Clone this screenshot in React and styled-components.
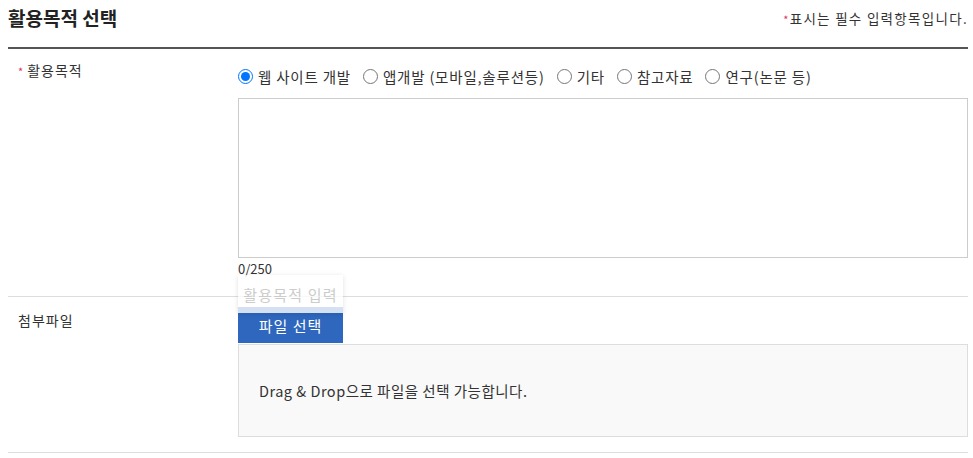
import styled, { createGlobalStyle } from 'styled-components';

const GlobalStyle = createGlobalStyle`
  body {
    margin: 0;
    background: #fff;
    font-family: "Noto Sans CJK KR", "Noto Sans", sans-serif;
    color: #333;
  }
`;

const Page = styled.div`
  width: 960px;
  padding: 0 8px;
`;

const Header = styled.div`
  display: flex;
  justify-content: space-between;
  align-items: center;
  height: 36px;
  padding-bottom: 11px;
  border-bottom: 2px solid #555;
`;

const Title = styled.h2`
  margin: 0;
  font-size: 19px;
  font-weight: 700;
  color: #222;
  line-height: 36px;
`;

const Note = styled.p`
  margin: 0;
  font-size: 13.5px;
  letter-spacing: 1.3px;
  color: #333;
`;

const Star = styled.span`
  color: #e0325b;
  font-size: 11px;
  margin-right: ${p => (p.$gap ? '3px' : '0')};
`;

const Row = styled.div`
  display: grid;
  grid-template-columns: 220px 1fr;
  padding: ${p => p.$pad};
  padding-left: 10px;
  border-bottom: 1px solid #ddd;
`;

const Label = styled.div`
  font-size: 14px;
  letter-spacing: 1px;
  line-height: 18px;
  color: #333;
  padding-top: ${p => p.$top || '0'};
`;

const Field = styled.div`
  display: flex;
  flex-direction: column;
  position: relative;
`;

const Radios = styled.div`
  display: flex;
  align-items: center;
  height: 20px;
  margin-top: 5px;
  margin-bottom: 12px;
  gap: 12px;
`;

const Option = styled.label`
  display: flex;
  align-items: center;
  gap: 5px;
  font-size: 14.5px;
  letter-spacing: 0.8px;
  color: #333;
  cursor: pointer;
`;

const Radio = styled.input`
  width: 15px;
  height: 15px;
  margin: 0;
`;

const TextArea = styled.textarea`
  box-sizing: border-box;
  width: 730px;
  height: 160px;
  border: 1px solid #ccc;
  resize: none;
  margin: 0;
  display: block;
`;

const Counter = styled.div`
  font-size: 13px;
  line-height: 18px;
  margin-top: 2px;
  color: #333;
`;

const Hint = styled.div`
  position: absolute;
  left: 0;
  top: 214px;
  width: 105px;
  height: 38px;
  display: flex;
  align-items: center;
  justify-content: center;
  background: rgba(255, 255, 255, 0.8);
  box-shadow: 0 1px 5px rgba(0, 0, 0, 0.12);
  font-size: 15px;
  color: #ccc;
  letter-spacing: 1.2px;
  z-index: 2;
`;

const Button = styled.button`
  width: 105px;
  height: 36px;
  border: none;
  background: #2e67bd;
  color: #fff;
  font-family: inherit;
  font-size: 15px;
  letter-spacing: 1px;
  cursor: pointer;
  padding: 0;
`;

const Drop = styled.div`
  box-sizing: border-box;
  width: 730px;
  height: 93px;
  margin-top: 1px;
  background: #f9f9f9;
  border: 1px solid #ddd;
  display: flex;
  align-items: center;
  padding-left: 20px;
  font-size: 14.5px;
  letter-spacing: 0.5px;
  color: #333;
`;

const options = ['웹 사이트 개발', '앱개발 (모바일,솔루션등)', '기타', '참고자료', '연구(논문 등)'];

export default function App() {
  return (
    <Page>
      <GlobalStyle />
      <Header>
        <Title>활용목적 선택</Title>
        <Note>
          <Star>*</Star>표시는 필수 입력항목입니다.
        </Note>
      </Header>
      <Row $pad="12px 0 18px">
        <Label>
          <Star $gap>*</Star>활용목적
        </Label>
        <Field>
          <Radios>
            {options.map((o, i) => (
              <Option key={o}>
                <Radio type="radio" name="purpose" defaultChecked={i === 0} />
                {o}
              </Option>
            ))}
          </Radios>
          <TextArea />
          <Counter>0/250</Counter>
          <Hint>활용목적 입력</Hint>
        </Field>
      </Row>
      <Row $pad="10px 0 15px">
        <Label $top="4px">첨부파일</Label>
        <Field>
          <div>
            <Button>파일 선택</Button>
          </div>
          <Drop>Drag &amp; Drop으로 파일을 선택 가능합니다.</Drop>
        </Field>
      </Row>
    </Page>
  );
}
